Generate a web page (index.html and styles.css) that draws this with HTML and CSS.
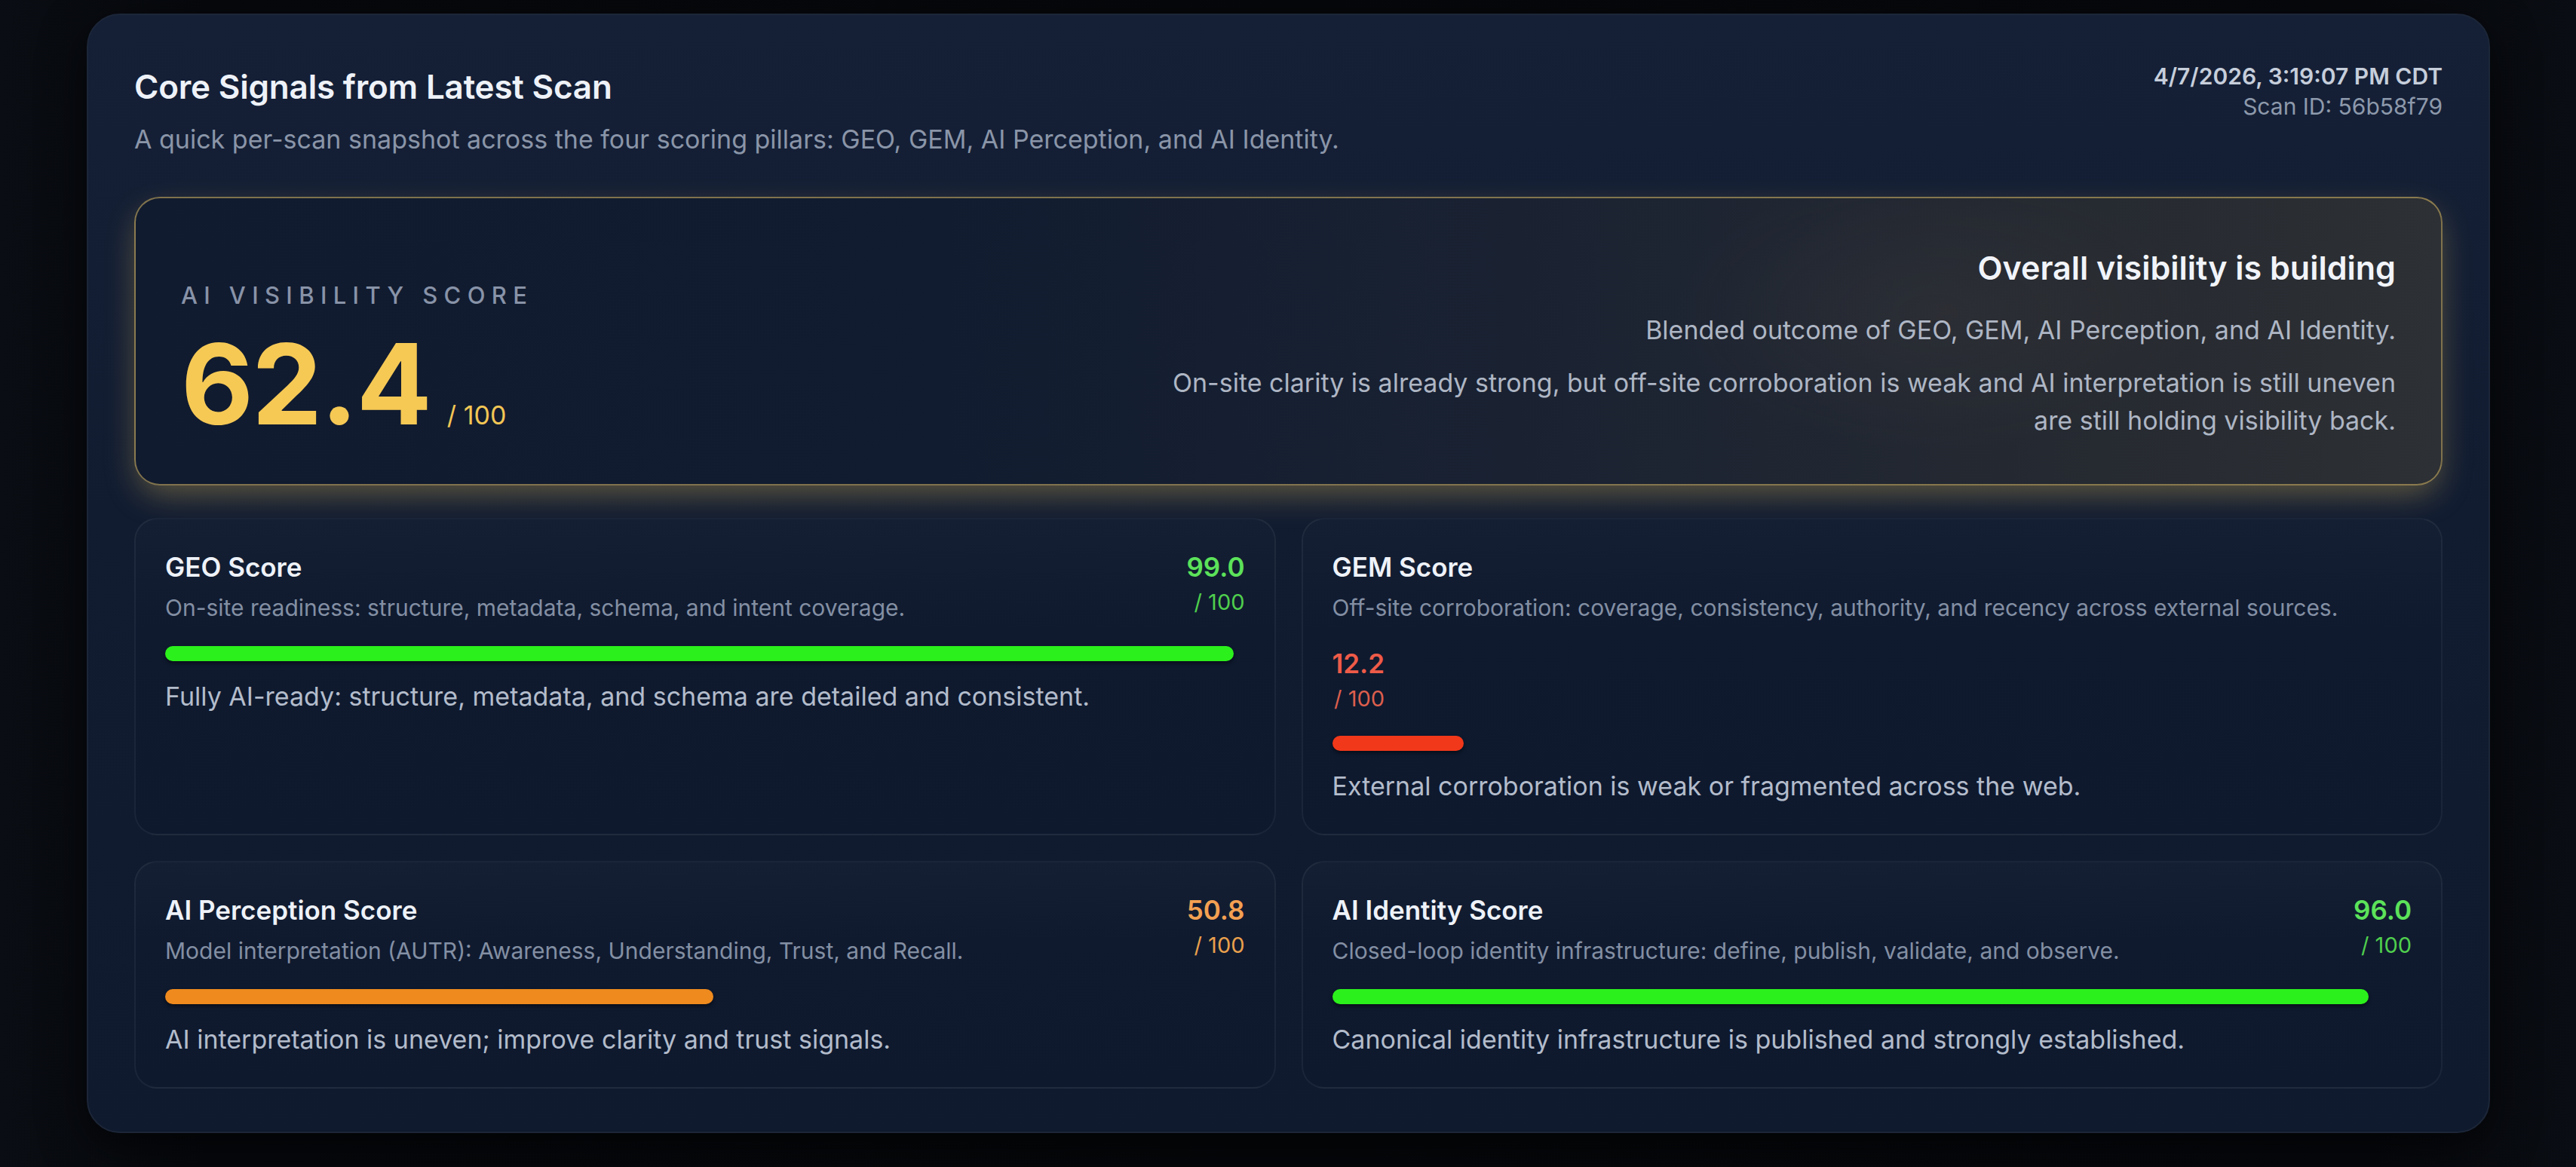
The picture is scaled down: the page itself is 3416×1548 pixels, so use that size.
FILE: index.html
```html
<!DOCTYPE html>
<html lang="en">
<head>
<meta charset="utf-8">
<title>Core Signals from Latest Scan</title>
<link rel="stylesheet" href="styles.css">
</head>
<body>
<main class="panel">
  <header class="panel-head">
    <div class="panel-titles">
      <h2 class="panel-title">Core Signals from Latest Scan</h2>
      <p class="panel-sub">A quick per-scan snapshot across the four scoring pillars: GEO, GEM, AI Perception, and AI Identity.</p>
    </div>
    <div class="panel-meta">
      <div class="meta-date">4/7/2026, 3:19:07 PM CDT</div>
      <div class="meta-id">Scan ID: 56b58f79</div>
    </div>
  </header>

  <section class="hero">
    <div class="hero-left">
      <div class="hero-label">AI Visibility Score</div>
      <div class="hero-score"><span class="hero-num">62.4</span><span class="hero-max">/ 100</span></div>
    </div>
    <div class="hero-right">
      <h3 class="hero-heading">Overall visibility is building</h3>
      <p class="hero-line">Blended outcome of GEO, GEM, AI Perception, and AI Identity.</p>
      <p class="hero-text">On-site clarity is already strong, but off-site corroboration is weak and AI interpretation is still uneven are still holding visibility back.</p>
    </div>
  </section>

  <section class="grid">
    <article class="card">
      <div class="card-head">
        <div class="card-titles">
          <h4 class="card-title">GEO Score</h4>
          <p class="card-desc">On-site readiness: structure, metadata, schema, and intent coverage.</p>
        </div>
        <div class="score score--green">
          <div class="score-val">99.0</div>
          <div class="score-max">/ 100</div>
        </div>
      </div>
      <div class="bar"><div class="bar-fill bar--green" style="width: 99%"></div></div>
      <p class="card-summary">Fully AI-ready: structure, metadata, and schema are detailed and consistent.</p>
    </article>

    <article class="card">
      <div class="card-head">
        <div class="card-titles">
          <h4 class="card-title">GEM Score</h4>
          <p class="card-desc">Off-site corroboration: coverage, consistency, authority, and recency across external sources.</p>
        </div>
        <div class="score score--red">
          <div class="score-val">12.2</div>
          <div class="score-max">/ 100</div>
        </div>
      </div>
      <div class="bar"><div class="bar-fill bar--red" style="width: 12.2%"></div></div>
      <p class="card-summary">External corroboration is weak or fragmented across the web.</p>
    </article>

    <article class="card">
      <div class="card-head">
        <div class="card-titles">
          <h4 class="card-title">AI Perception Score</h4>
          <p class="card-desc">Model interpretation (AUTR): Awareness, Understanding, Trust, and Recall.</p>
        </div>
        <div class="score score--orange">
          <div class="score-val">50.8</div>
          <div class="score-max">/ 100</div>
        </div>
      </div>
      <div class="bar"><div class="bar-fill bar--orange" style="width: 50.8%"></div></div>
      <p class="card-summary">AI interpretation is uneven; improve clarity and trust signals.</p>
    </article>

    <article class="card">
      <div class="card-head">
        <div class="card-titles">
          <h4 class="card-title">AI Identity Score</h4>
          <p class="card-desc">Closed-loop identity infrastructure: define, publish, validate, and observe.</p>
        </div>
        <div class="score score--green">
          <div class="score-val">96.0</div>
          <div class="score-max">/ 100</div>
        </div>
      </div>
      <div class="bar"><div class="bar-fill bar--green" style="width: 96%"></div></div>
      <p class="card-summary">Canonical identity infrastructure is published and strongly established.</p>
    </article>
  </section>
</main>
</body>
</html>
```

FILE: styles.css
```css
* { box-sizing: border-box; }

html, body {
  margin: 0;
  padding: 0;
}

body {
  width: 3416px;
  height: 1548px;
  overflow: hidden;
  font-family: Inter, "Noto Sans", "Liberation Sans", sans-serif;
  background:
    linear-gradient(90deg, #0a0d13 0%, #06080c 8%, #05070a 50%, #06080c 92%, #0a0d13 100%);
  padding: 18px 114px 45px 115px;
}

.panel {
  height: 1485px;
  border: 2px solid #1c2638;
  border-radius: 44px;
  background: linear-gradient(180deg, #152037 0%, #111c31 45%, #0f1a2e 100%);
  padding: 61px 61px 61px 61px;
  box-shadow: 0 20px 60px rgba(0, 0, 0, 0.6);
}

/* header */
.panel-head {
  display: flex;
  justify-content: space-between;
  align-items: flex-start;
}

.panel-title {
  margin: 8px 0 0;
  font-size: 44px;
  line-height: 53px;
  font-weight: 600;
  color: #eef2f8;
  letter-spacing: -0.2px;
}

.panel-sub {
  margin: 21px 0 0;
  font-size: 34px;
  line-height: 44px;
  color: #8a95a8;
}

.panel-meta {
  text-align: right;
  font-size: 30px;
  line-height: 40px;
}

.meta-date {
  font-weight: 600;
  color: #c6cedb;
}

.meta-id {
  color: #8d99ab;
}

/* hero */
.hero {
  margin-top: 54px;
  display: flex;
  justify-content: space-between;
  align-items: flex-start;
  border: 2px solid rgba(196, 168, 96, 0.62);
  border-radius: 34px;
  padding: 67px 60px 58px 60px;
  background:
    radial-gradient(ellipse 500px 260px at 78% 40%, rgba(120, 100, 80, 0.10), transparent 70%),
    linear-gradient(90deg, #111b2f 0%, #111c30 35%, #1a2232 60%, #262a31 85%, #2d3034 100%);
  box-shadow: 0 16px 44px -6px rgba(214, 178, 90, 0.42);
}

.hero-left {
  margin-top: 44px;
}

.hero-label {
  font-size: 31px;
  line-height: 36px;
  font-weight: 500;
  letter-spacing: 0.27em;
  text-transform: uppercase;
  color: #8893a8;
}

.hero-score {
  margin-top: 26px;
  display: flex;
  align-items: baseline;
  height: 148px;
}

.hero-num {
  font-size: 148px;
  line-height: 148px;
  font-weight: 700;
  color: #f6c955;
  letter-spacing: -2px;
}

.hero-max {
  margin-left: 22px;
  font-size: 34px;
  line-height: 34px;
  font-weight: 400;
  color: #f2c655;
}

.hero-right {
  text-align: right;
  max-width: 1660px;
}

.hero-heading {
  margin: 0;
  font-size: 43px;
  line-height: 50px;
  font-weight: 600;
  color: #f1f4f9;
}

.hero-line {
  margin: 33px 0 0;
  font-size: 34px;
  line-height: 50px;
  color: #aeb6c4;
}

.hero-text {
  margin: 20px 0 0;
  font-size: 34px;
  line-height: 50px;
  color: #aeb6c4;
}

/* cards */
.grid {
  margin-top: 43px;
  display: grid;
  grid-template-columns: 1fr 1fr;
  gap: 34px;
}

.card {
  border: 2px solid rgba(255, 255, 255, 0.055);
  border-radius: 30px;
  padding: 42px 39px 40px 39px;
  background: linear-gradient(180deg, #141f33 0%, #0f1a2f 35%, #0e192e 100%);
}

.card-head {
  display: flex;
  flex-wrap: wrap;
  justify-content: space-between;
  column-gap: 64px;
  row-gap: 32px;
}

.card-title {
  margin: 0;
  font-size: 35px;
  line-height: 43px;
  font-weight: 600;
  color: #eef2f8;
}

.card-desc {
  margin: 12px 0 0;
  font-size: 30px;
  line-height: 41px;
  color: #838fa3;
}

.score {
  text-align: right;
}

.score-val {
  font-size: 35px;
  line-height: 43px;
  font-weight: 600;
}

.score-max {
  margin-top: 5px;
  font-size: 29px;
  line-height: 39px;
}

.score--green .score-val { color: #5ce25a; }
.score--green .score-max { color: #4fcf4d; }
.score--red .score-val { color: #ee5b48; }
.score--red .score-max { color: #dc5f4d; }
.score--orange .score-val { color: #f3a052; }
.score--orange .score-max { color: #e9a04c; }

.bar {
  margin-top: 30px;
  height: 20px;
}

.bar-fill {
  height: 100%;
  border-radius: 10px;
  box-shadow: 0 3px 5px rgba(0, 0, 0, 0.45);
}

.bar--green { background: #2cf01c; }
.bar--red { background: #f2381a; }
.bar--orange { background: #ee8a1e; }

.card-summary {
  margin: 23px 0 0;
  font-size: 34px;
  line-height: 47px;
  color: #b3bccb;
}
```
